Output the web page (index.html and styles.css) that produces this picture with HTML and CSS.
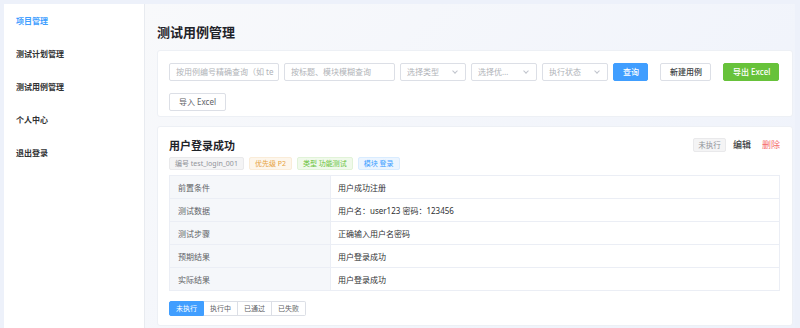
FILE: index.html
```html
<!DOCTYPE html>
<html lang="zh-CN">
<head>
<meta charset="UTF-8" />
<meta name="viewport" content="width=device-width, initial-scale=1" />
<title>测试用例管理</title>
<link rel="stylesheet" href="styles.css">
</head>
<body>

<div class="layout">
  <div class="sidebar">
    <div class="menu-item active">项目管理</div>
    <div class="menu-item">测试计划管理</div>
    <div class="menu-item">测试用例管理</div>
    <div class="menu-item">个人中心</div>
    <div class="menu-item">退出登录</div>
  </div>

  <div class="main">
    <h2 class="page-title">测试用例管理</h2>

    <div class="card toolbar">
      <div class="input w-code">按用例编号精确查询（如 te</div>
      <div class="input w-title">按标题、模块模糊查询</div>
      <div class="input select">选择类型<span class="arrow"></span></div>
      <div class="input select">选择优…<span class="arrow"></span></div>
      <div class="input select">执行状态<span class="arrow"></span></div>
      <div class="btn primary">查询</div>
      <div class="btn plain spaced">新建用例</div>
      <div class="btn success spaced">导出 Excel</div>
      <div class="btn">导入 Excel</div>
    </div>

    <div class="card case">
      <div class="case-head">
        <div class="case-title">用户登录成功</div>
        <div class="case-actions">
          <span class="tag gray">未执行</span>
          <span class="link">编辑</span>
          <span class="link danger">删除</span>
        </div>
      </div>
      <div class="tags">
        <span class="tag gray">编号 test_login_001</span>
        <span class="tag orange">优先级 P2</span>
        <span class="tag green">类型 功能测试</span>
        <span class="tag blue">模块 登录</span>
      </div>
      <table class="detail">
        <tr><th>前置条件</th><td>用户成功注册</td></tr>
        <tr><th>测试数据</th><td>用户名：user123 密码：123456</td></tr>
        <tr><th>测试步骤</th><td>正确输入用户名密码</td></tr>
        <tr><th>预期结果</th><td>用户登录成功</td></tr>
        <tr><th>实际结果</th><td>用户登录成功</td></tr>
      </table>
      <div class="status-group">
        <span class="status active">未执行</span>
        <span class="status">执行中</span>
        <span class="status">已通过</span>
        <span class="status">已失败</span>
      </div>
    </div>
  </div>
</div>

</body>
</html>
```

FILE: styles.css
```css
* {
  box-sizing: border-box;
}
body {
  margin: 0;
  padding: 4px 5px 0 4px;
  height: 328px;
  overflow: hidden;
  background: #edf1fa;
  font-family: "Noto Sans", "Noto Sans CJK SC", sans-serif;
  color: #303133;
}
.layout {
  display: flex;
  height: 324px;
}

/* sidebar */
.sidebar {
  width: 141px;
  background: #fff;
  border-right: 1px solid #e8ebf0;
}
.menu-item {
  height: 33px;
  line-height: 33px;
  padding-left: 12px;
  font-size: 8px;
  font-weight: 600;
  color: #303133;
}
.menu-item.active {
  color: #409eff;
}

/* main */
.main {
  flex: 1;
  padding: 19px 2px 0 12px;
  background: linear-gradient(135deg, #f8f9fb, #eef2fb);
}
.page-title {
  margin: 0 0 9px;
  font-size: 13px;
  line-height: 18px;
  font-weight: 700;
  color: #1f2329;
}
.card {
  background: #fff;
  border: 1px solid #edf0f5;
  border-radius: 3px;
}

/* toolbar */
.toolbar {
  display: flex;
  flex-wrap: wrap;
  gap: 6px 5px;
  height: 67px;
  padding: 12px 12px 0 11px;
}
.input {
  height: 18px;
  line-height: 16px;
  padding: 0 6px;
  border: 1px solid #dcdfe6;
  border-radius: 2px;
  font-size: 8px;
  color: #b0b3b8;
  white-space: nowrap;
  overflow: hidden;
}
.w-code { width: 110px; }
.w-title { width: 111px; }
.select {
  width: 66px;
  position: relative;
}
.arrow {
  position: absolute;
  right: 8px;
  top: 5px;
  width: 4px;
  height: 4px;
  border-right: 1px solid #c0c4cc;
  border-bottom: 1px solid #c0c4cc;
  transform: rotate(45deg);
}
.btn {
  height: 18px;
  line-height: 16px;
  padding: 0 9px;
  border: 1px solid #dcdfe6;
  border-radius: 2px;
  font-size: 8px;
  color: #606266;
  background: #fff;
  white-space: nowrap;
}
.btn.plain {
  width: 51px;
  text-align: center;
  font-weight: 500;
  color: #3c3f44;
}
.btn.primary {
  width: 35px;
  text-align: center;
  background: #409eff;
  border-color: #409eff;
  color: #fff;
  font-weight: 500;
}
.btn.success {
  width: 56px;
  text-align: center;
  background: #67c23a;
  border-color: #67c23a;
  color: #fff;
  font-weight: 500;
}
.btn.spaced {
  margin-left: 7px;
}

/* case card */
.case {
  margin-top: 9px;
  padding: 10px 12px 9px 11px;
}
.case-head {
  display: flex;
  justify-content: space-between;
  align-items: center;
  height: 15px;
}
.case-title {
  font-size: 11px;
  font-weight: 700;
  color: #1f2329;
}
.case-actions {
  display: flex;
  align-items: center;
}
.case-actions .tag {
  width: 33px;
  height: 14px;
  line-height: 12px;
  margin-right: 7px;
  padding: 0;
  text-align: center;
  font-size: 7.5px;
}
.link {
  font-size: 9px;
  font-weight: 500;
  color: #3c3f44;
}
.link.danger {
  margin-left: 11px;
  color: #f56c6c;
  font-weight: 400;
}
.tags {
  display: flex;
  gap: 5px;
  margin-top: 5px;
}
.tag {
  display: inline-block;
  height: 13px;
  line-height: 11px;
  padding: 0 5px;
  border: 1px solid;
  border-radius: 2px;
  font-size: 7px;
  white-space: nowrap;
}
.tag.gray { background: #f4f4f5; border-color: #e9e9eb; color: #909399; }
.tag.orange { background: #fdf6ec; border-color: #faecd8; color: #e6a23c; }
.tag.green { background: #f0f9eb; border-color: #e1f3d8; color: #67c23a; }
.tag.blue { background: #ecf5ff; border-color: #d9ecff; color: #409eff; }

.detail {
  width: 100%;
  margin-top: 5px;
  border-collapse: collapse;
  font-size: 8px;
}
.detail th,
.detail td {
  height: 23px;
  border: 1px solid #ebeef5;
  text-align: left;
  font-weight: 400;
}
.detail th {
  width: 161px;
  padding-left: 8px;
  background: #f5f7fa;
  color: #606266;
}
.detail td {
  padding-left: 7px;
  color: #303133;
}

.status-group {
  display: flex;
  margin-top: 10px;
}
.status {
  height: 15px;
  line-height: 13px;
  padding: 0 6px;
  border: 1px solid #dcdfe6;
  border-left: none;
  font-size: 7px;
  color: #606266;
  background: #fff;
}
.status:first-child {
  border-left: 1px solid #409eff;
  border-radius: 2px 0 0 2px;
}
.status:last-child {
  border-radius: 0 2px 2px 0;
}
.status.active {
  background: #409eff;
  border-color: #409eff;
  color: #fff;
}
```
